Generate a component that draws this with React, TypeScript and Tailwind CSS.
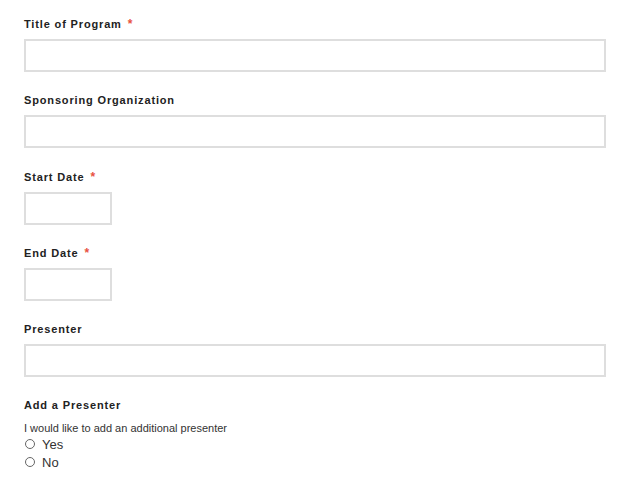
import React from 'react';

const Label = ({ text, required }: { text: string; required?: boolean }) => (
  <div className="h-4 flex items-center text-[11px] font-bold tracking-[0.85px] text-[#222] leading-4">
    {text}
    {required && <span className="ml-[6px] text-[#e8523f] text-[12px]">*</span>}
  </div>
);

const Field = ({ label, required, short }: { label: string; required?: boolean; short?: boolean }) => (
  <div className="mb-[20.3px]">
    <Label text={label} required={required} />
    <input
      type="text"
      className={`mt-[7px] block h-[33px] border-2 border-[#dedede] bg-white outline-none ${short ? 'w-[88px]' : 'w-full'}`}
    />
  </div>
);

const App = () => {
  return (
    <div className="min-h-[484px] bg-white pl-6 pr-[18px] pt-4" style={{ fontFamily: '"Liberation Sans", Arial, sans-serif' }}>
      <Field label="Title of Program" required />
      <Field label="Sponsoring Organization" />
      <Field label="Start Date" required short />
      <Field label="End Date" required short />
      <Field label="Presenter" />
      <div>
        <Label text="Add a Presenter" />
        <div className="mt-2 text-[11px] leading-[14px] text-[#333]">I would like to add an additional presenter</div>
        {['Yes', 'No'].map((opt) => (
          <label key={opt} className="flex items-center h-[18px] text-[13px] text-[#333]">
            <span className="ml-px w-[10px] h-[10px] rounded-full border border-[#666] bg-white" />
            <span className="ml-[7px]">{opt}</span>
          </label>
        ))}
      </div>
    </div>
  );
};

export default App;
